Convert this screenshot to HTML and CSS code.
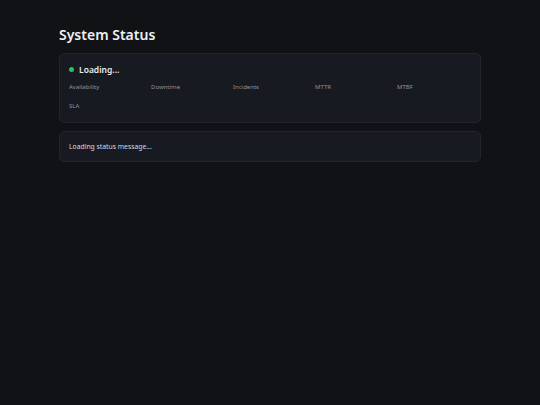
FILE: index.html
```html
<!DOCTYPE html>
<html>
<head>
<meta charset="utf-8">
<link rel="stylesheet" href="styles.css">
</head>
<body>
<main class="page">
  <h1 class="title">System Status</h1>
  <section class="card status-card">
    <div class="status-head">
      <span class="dot"></span>
      <span class="status-text">Loading...</span>
    </div>
    <div class="metrics">
      <div class="metric">Availability</div>
      <div class="metric">Downtime</div>
      <div class="metric">Incidents</div>
      <div class="metric">MTTR</div>
      <div class="metric">MTBF</div>
      <div class="metric">SLA</div>
    </div>
  </section>
  <section class="card message-card">
    <p class="message">Loading status message...</p>
  </section>
</main>
</body>
</html>
```
FILE: styles.css
```css
html, body {
  margin: 0;
  padding: 0;
  background: #111216;
  font-family: "Noto Sans", "Open Sans", sans-serif;
  color: #e6e8ec;
}
.page {
  width: 422px;
  margin: 0 auto;
  padding-top: 24px;
}
.title {
  margin: 0 0 8px 0;
  font-size: 14px;
  line-height: 21px;
  font-weight: 600;
  color: #eef0f3;
}
.card {
  background: #181a21;
  border: 1px solid #22252d;
  border-radius: 5px;
  box-sizing: border-box;
}
.status-card {
  height: 70px;
  padding: 9px 9px 0 9px;
  margin-bottom: 8px;
}
.status-head {
  display: flex;
  align-items: center;
  gap: 5px;
  height: 13px;
}
.dot {
  width: 5px;
  height: 5px;
  border-radius: 50%;
  background: #22c55e;
}
.status-text {
  font-size: 8.5px;
  font-weight: 600;
  color: #e8eaee;
}
.metrics {
  display: grid;
  grid-template-columns: repeat(5, 1fr);
  column-gap: 8px;
  row-gap: 10px;
  margin-top: 7px;
}
.metric {
  font-size: 6px;
  line-height: 9px;
  color: #8e939c;
}
.message-card {
  height: 31px;
  padding: 0 9px;
  display: flex;
  align-items: center;
}
.message {
  margin: 0;
  font-size: 6.8px;
  color: #d8dbe0;
}
```
